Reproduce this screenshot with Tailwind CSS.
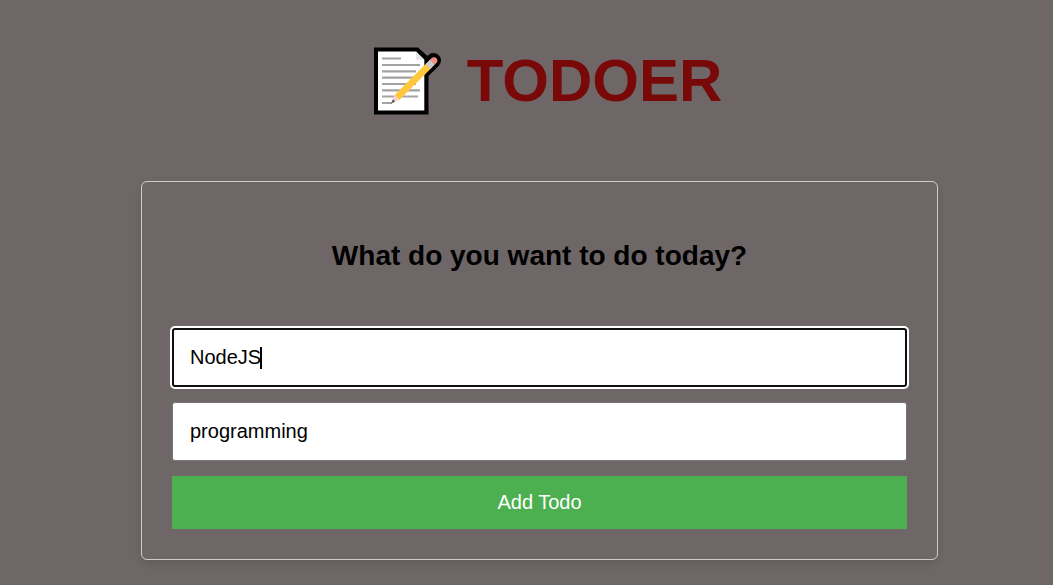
<!DOCTYPE html>
<html lang="en">
<head>
<meta charset="utf-8">
<meta name="viewport" content="width=device-width, initial-scale=1">
<title>Todoer</title>
<script src="https://cdn.jsdelivr.net/npm/@tailwindcss/browser@4"></script>
</head>
<body class="min-h-screen bg-[#6f6767] pt-[41px] pr-0 pb-6 pl-[26px] font-['Liberation_Sans',Arial,sans-serif] text-black">
  <header>
    <h1 class="flex items-center justify-center text-[60px] leading-[80px] font-bold text-[#790808]">
      <svg class="mr-6 ml-4 h-[70px] w-[70px] shrink-0" viewBox="0 0 70 70" aria-hidden="true">
        <path d="M1 1.500H45L55.500 11V68.500H1Z" fill="#000"/>
        <path d="M60.500 14.500L50.500 24.500" fill="none" stroke="#000" stroke-width="15" stroke-linecap="round"/>
        <path d="M5 5.500H43L51.300 13.800V64.500H5Z" fill="#fff"/>
        <path d="M43 5.500L51.300 13.800H43Z" fill="#e3e3e5"/>
        <path d="M9 12.500H28M9 19H47M9 25.300H43M9 31.600H47M9 38H43M9 44.300H47M9 50.500H45M9 57H19" fill="none" stroke="#a3a3a3" stroke-width="2.200"/>
        <path d="M56 19.500L24 51.500" fill="none" stroke="#ffc83d" stroke-width="6.800"/>
        <path d="M21.600 49.100L26.400 53.900L18.500 57Z" fill="#f7d3ca"/>
        <path d="M20 53.300L22.200 55.500L18 57.500Z" fill="#515151"/>
        <path d="M59.500 16L55 20.500" fill="none" stroke="#c9cbcd" stroke-width="6.800"/>
        <path d="M56.800 13.800L58.500 12.200C60 10.800 62 10.800 63.400 12.200C64.800 13.600 64.800 15.600 63.300 17.100L61.700 18.700Z" fill="#f58f84"/>
      </svg>
      <span>TODOER</span>
    </h1>
  </header>
  <main class="mx-auto mt-[60px] w-full max-w-[797px] rounded-md border border-[#cccccc] p-[30px] shadow-[0_4px_8px_rgba(0,0,0,0.1)]">
    <h2 class="mt-7 text-center text-[28px] leading-8 font-bold">What do you want to do today?</h2>
    <form class="mt-14 flex flex-col gap-[15px]">
      <div class="relative text-xl">
        <input type="text" aria-label="Todo" value="NodeJS" class="block h-[59px] w-full rounded-[3px] border-2 border-[#101010] bg-white px-4 caret-transparent ring-2 ring-white outline-none">
        <div class="pointer-events-none absolute inset-y-0 left-[18px] flex items-center" aria-hidden="true">
          <span class="invisible">NodeJS</span><span class="-ml-px h-[22px] w-0.5 bg-black"></span>
        </div>
      </div>
      <input type="text" aria-label="Category" value="programming" class="block h-[59px] w-full rounded-[3px] border border-[#767676] bg-white px-[17px] text-xl outline-none">
      <button type="button" class="h-[53px] w-full bg-[#4caf50] pb-0.5 text-xl text-white">Add Todo</button>
    </form>
  </main>
</body>
</html>
